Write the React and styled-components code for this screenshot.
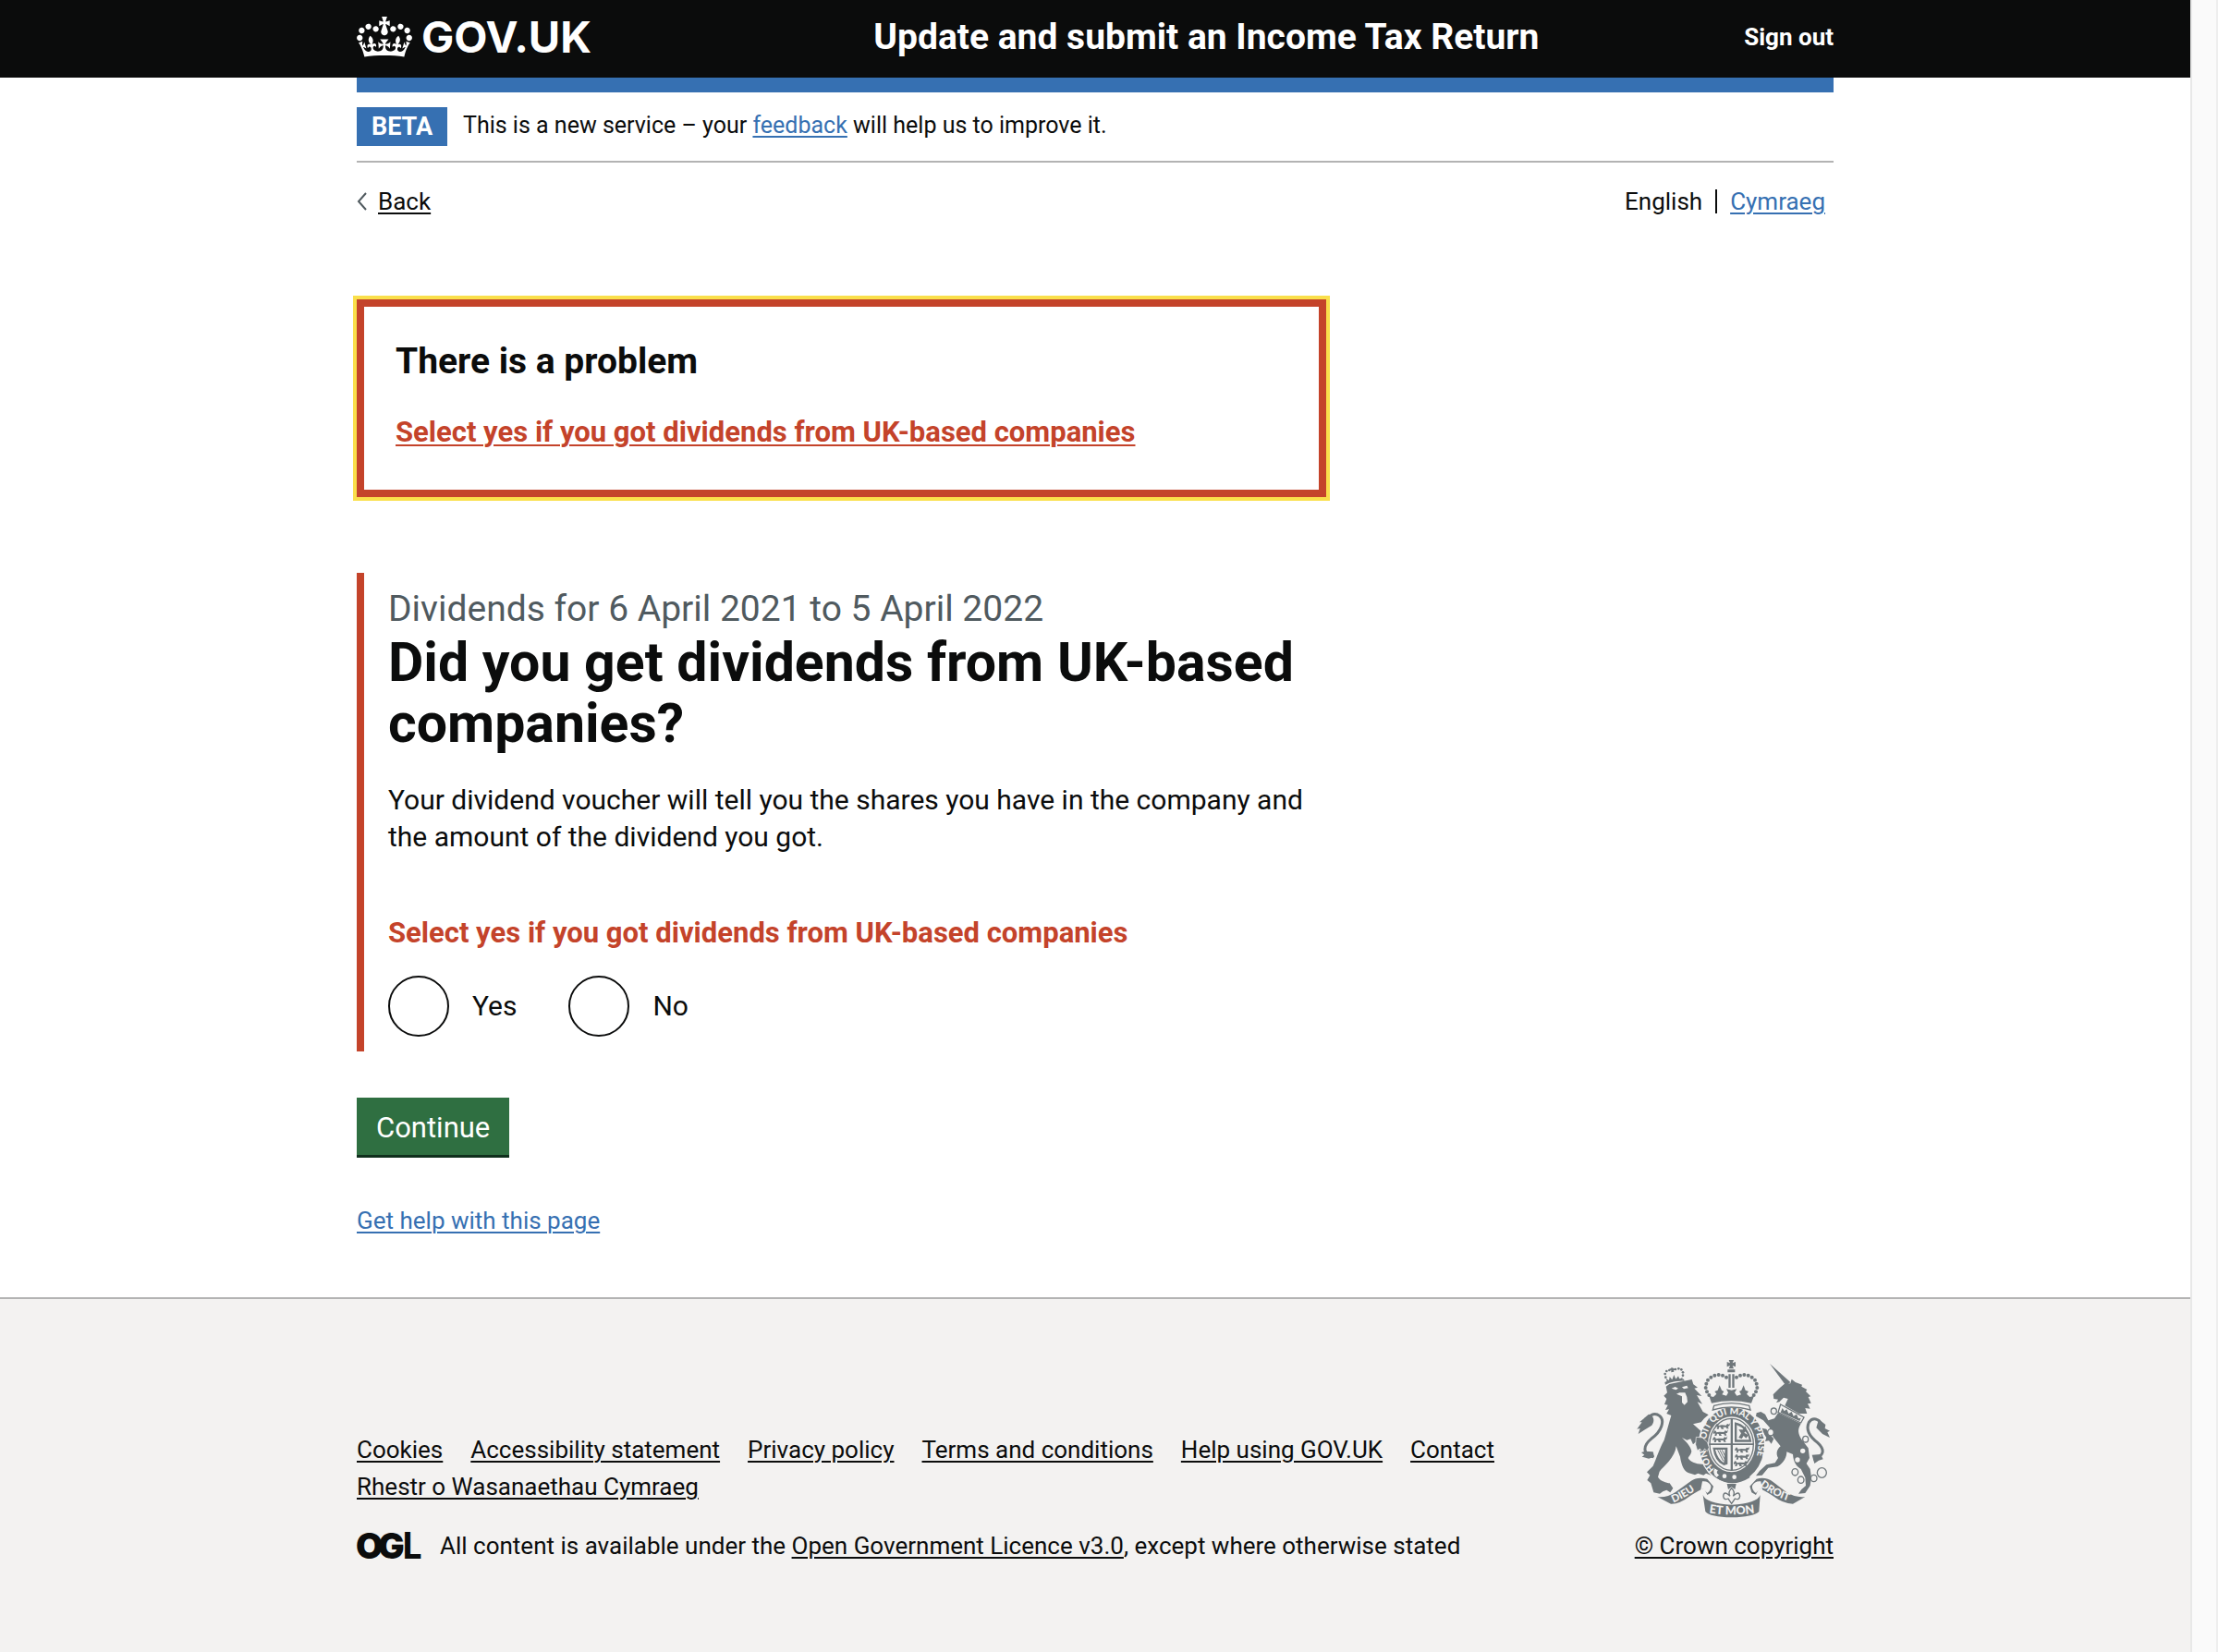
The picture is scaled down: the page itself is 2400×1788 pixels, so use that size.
import React from 'react';
import styled, { createGlobalStyle, css } from 'styled-components';

const color = {
  ink: '#0b0c0c',
  blue: '#3670b2',
  red: '#c4432a',
  yellow: '#fadf4b',
  green: '#2f6f41',
  greenShadow: '#0f2f1c',
  grey: '#505a5f',
  line: '#b3b3b3',
  panel: '#f3f2f1',
  crest: '#6f777b',
};

const GlobalStyle = createGlobalStyle`
  *, *::before, *::after { box-sizing: border-box; }
  body {
    margin: 0;
    background: #fff;
    color: ${color.ink};
    font-family: Roboto, "Liberation Sans", Arial, sans-serif;
    font-size: 26px;
    line-height: 40px;
  }
`;

const Frame = styled.div`
  display: flex;
  min-height: 100vh;
`;

const Page = styled.div`
  flex: 1;
  min-width: 0;
  display: flex;
  flex-direction: column;
`;

const ScrollTrack = styled.div`
  flex: 0 0 30px;
  background: #fafafa;
  border-left: 2px solid #e8e8e8;
  border-right: 2px solid #eeeeee;
`;

const Container = styled.div`
  width: 100%;
  max-width: 1598px;
  margin: 0 auto;
`;

const Link = styled.a`
  color: ${(p) => (p.$tone ? color[p.$tone] : color.ink)};
  text-decoration: underline;
  text-decoration-thickness: 2px;
  text-underline-offset: 3px;
  ${(p) => p.$bold && css`font-weight: 700;`}
`;

const Header = styled.header`
  background: ${color.ink};
  color: #fff;
`;

const HeaderRow = styled(Container)`
  display: flex;
  align-items: center;
  height: 84px;
  padding-bottom: 4px;
`;

const LogoCell = styled.div`
  flex: 0 0 35%;
`;

const LogoLink = styled.a`
  display: flex;
  align-items: center;
  gap: 10px;
  color: #fff;
  text-decoration: none;
  font: 700 47px/56px Inter, "Liberation Sans", sans-serif;
`;

const ServiceName = styled.a`
  flex: 1;
  color: #fff;
  text-decoration: none;
  font-size: 39px;
  font-weight: 700;
  line-height: 50px;
`;

const SignOut = styled.a`
  color: #fff;
  text-decoration: none;
  font-weight: 700;
`;

const BlueBar = styled(Container)`
  height: 16px;
  background: ${color.blue};
`;

const PhaseBanner = styled(Container)`
  display: flex;
  align-items: flex-start;
  gap: 17px;
  padding: 16px 0;
  border-bottom: 2px solid ${color.line};
`;

const PhaseTag = styled.strong`
  min-width: 98px;
  background: ${color.blue};
  color: #fff;
  font-size: 27px;
  font-weight: 700;
  line-height: 42px;
  text-align: center;
`;

const PhaseText = styled.span`
  font-size: 25px;
`;

const TopRow = styled(Container)`
  display: flex;
  justify-content: space-between;
  align-items: center;
  margin-top: 25px;
  line-height: 34px;
`;

const BackLink = styled.a`
  display: flex;
  align-items: center;
  gap: 12px;
  color: ${color.ink};
  text-decoration: underline;
  text-decoration-thickness: 2px;
  text-underline-offset: 3px;
`;

const LanguageList = styled.ul`
  display: flex;
  margin: 0;
  padding: 0 9px 0 0;
  list-style: none;
  line-height: 26px;
`;

const Language = styled.li`
  & + & {
    margin-left: 14px;
    padding-left: 14px;
    border-left: 2px solid ${color.ink};
  }
`;

const Main = styled(Container).attrs({ as: 'main' })`
  padding: 89px 0 66px;
`;

const Column = styled.div`
  width: calc((100% + 50px) * 2 / 3 - 50px);
`;

const ErrorSummary = styled.section`
  padding: 34px 34px 42px;
  border: 8px solid ${color.red};
  outline: 4px solid ${color.yellow};
`;

const ErrorTitle = styled.h2`
  margin: 0 0 32px;
  font-size: 39px;
  font-weight: 700;
  line-height: 50px;
`;

const ErrorList = styled.ul`
  margin: 0;
  padding: 0;
  list-style: none;
  font-size: 31px;
`;

const FormGroup = styled.div`
  margin-top: 82px;
  padding: 14px 0 16px 26px;
  border-left: 8px solid ${color.red};
`;

const Caption = styled.span`
  display: block;
  color: ${color.grey};
  font-size: 39px;
  line-height: 50px;
`;

const Heading = styled.h1`
  margin: 0 0 30px;
  font-size: 59px;
  font-weight: 700;
  line-height: 66px;
`;

const Paragraph = styled.p`
  margin: 0;
  font-size: 30px;
`;

const Fieldset = styled.fieldset`
  min-width: 0;
  margin: 0;
  padding: 0;
  border: 0;
`;

const ErrorMessage = styled.p`
  margin: 64px 0 26px;
  color: ${color.red};
  font-size: 31px;
  font-weight: 700;
`;

const Radios = styled.div`
  display: flex;
  gap: 56px;
`;

const RadioItem = styled.label`
  display: flex;
  align-items: center;
  gap: 25px;
  font-size: 30px;
`;

const RadioInput = styled.input`
  appearance: none;
  width: 66px;
  height: 66px;
  margin: 0;
  border: 2px solid ${color.ink};
  border-radius: 50%;
  background: #fff;

  &:checked {
    background: radial-gradient(${color.ink} 16px, #fff 17px);
  }
`;

const Button = styled.button`
  display: block;
  margin: 50px 0 54px;
  padding: 13px 21px 9px;
  border: 0;
  background: ${color.green};
  box-shadow: 0 3px 0 ${color.greenShadow};
  color: #fff;
  font: inherit;
  font-size: 31px;
  line-height: 40px;
`;

const HelpLine = styled.p`
  margin: 0;
  line-height: 34px;
`;

const Footer = styled.footer`
  flex: 1;
  background: ${color.panel};
  border-top: 2px solid ${color.line};
`;

const FooterRow = styled(Container)`
  display: flex;
  align-items: flex-end;
  gap: 50px;
  padding: 66px 0 95px;
`;

const FooterMeta = styled.div`
  flex: 1;
`;

const FooterLinks = styled.ul`
  display: flex;
  flex-wrap: wrap;
  column-gap: 30px;
  margin: 0 0 24px;
  padding: 0;
  list-style: none;
`;

const Licence = styled.div`
  display: flex;
  align-items: center;
  gap: 22px;
`;

const Copyright = styled.div`
  display: flex;
  flex-direction: column;
  align-items: center;
  gap: 11px;
`;

const Drawing = styled.svg`
  display: block;
  flex: none;
  overflow: visible;
`;

function CrownIcon() {
  return (
    <Drawing width="60" height="44" viewBox="0 0 132 97" fill="currentColor" aria-hidden="true">
      <path d="M25 30.2c3.5 1.5 7.7-.2 9.1-3.7 1.5-3.6-.2-7.8-3.9-9.2-3.6-1.4-7.6.3-9.1 3.9-1.4 3.5.3 7.5 3.9 9zM9 39.5c3.6 1.5 7.8-.2 9.2-3.7 1.5-3.6-.2-7.8-3.9-9.1-3.6-1.5-7.6.2-9.1 3.8-1.4 3.5.3 7.5 3.8 9zM4.4 57.2c3.5 1.5 7.7-.2 9.1-3.8 1.5-3.6-.2-7.7-3.9-9.1-3.5-1.5-7.6.3-9.1 3.8-1.4 3.5.3 7.6 3.9 9.1zm38.3-21.4c3.5 1.5 7.7-.2 9.1-3.8 1.5-3.6-.2-7.7-3.9-9.1-3.6-1.5-7.6.3-9.1 3.8-1.3 3.6.4 7.7 3.9 9.1zm64.4-5.6c-3.6 1.5-7.8-.2-9.1-3.7-1.5-3.6.2-7.8 3.8-9.2 3.6-1.4 7.7.3 9.2 3.9 1.3 3.5-.4 7.5-3.9 9zm15.9 9.3c-3.6 1.5-7.7-.2-9.1-3.7-1.5-3.6.2-7.8 3.7-9.1 3.6-1.5 7.7.2 9.2 3.8 1.5 3.5-.3 7.5-3.8 9zm4.7 17.7c-3.6 1.5-7.8-.2-9.2-3.8-1.5-3.6.2-7.7 3.9-9.1 3.6-1.5 7.7.3 9.2 3.8 1.3 3.5-.4 7.6-3.9 9.1zM89.3 35.8c-3.6 1.5-7.8-.2-9.2-3.8-1.4-3.6.2-7.7 3.9-9.1 3.6-1.5 7.7.3 9.2 3.8 1.4 3.6-.3 7.7-3.9 9.1zM69.7 17.7l8.9 4.7V9.3l-8.9 2.8c-.2-.3-.5-.6-.9-.9L72.4 0H59.6l3.5 11.2c-.3.3-.6.5-.9.9l-8.8-2.8v13.1l8.8-4.7c.3.3.6.7.9.9l-5 15.4v.1c-.2.8-.4 1.6-.4 2.4 0 4.1 3.1 7.5 7 8.1h.2c.3 0 .7.1 1 .1.4 0 .7 0 1-.1h.2c4-.6 7.1-4.1 7.1-8.1 0-.8-.1-1.7-.4-2.4V34l-5.1-15.4c.4-.2.7-.6 1-.9zM66 92.8c16.9 0 32.8 1.1 47.1 3.2 4-16.9 8.9-26.7 14-33.5l-9.6-3.4c1 4.9 1.1 7.2 0 10.2-1.5-1.4-3-4.3-4.2-8.7L108.6 76c2.8-2 5-3.2 7.5-3.3-4.4 9.4-10 11.9-13.6 11.2-4.3-.8-6.3-4.6-5.6-7.9 1-4.7 5.7-5.9 8-.5 4.3-8.7-3-11.4-7.6-8.8 7.1-7.2 7.9-13.5 2.1-21.1-8 6.1-8.1 12.3-4.5 20.8-4.7-5.4-12.1-2.5-9.5 6.2 3.4-5.2 7.9-2 7.2 3.1-.6 4.3-6.4 7.8-13.5 7.2-10.3-.9-10.9-8-11.2-13.8 2.5-.5 7.1 1.8 11 7.3L80.2 60c-4.1 4.4-8 5.3-12.3 5.4 1.4-4.4 8-11.6 8-11.6H55.5s6.4 7.2 7.9 11.6c-4.2-.1-8-1-12.3-5.4l1.4 16.4c3.9-5.5 8.5-7.7 10.9-7.3-.3 5.8-.9 12.8-11.1 13.8-7.2.6-12.9-2.9-13.5-7.2-.7-5 3.8-8.3 7.1-3.1 2.7-8.7-4.6-11.6-9.4-6.2 3.7-8.5 3.6-14.7-4.6-20.8-5.8 7.6-5 13.9 2.2 21.1-4.7-2.6-11.9.1-7.7 8.8 2.3-5.5 7.1-4.2 8.1.5.7 3.3-1.3 7.1-5.7 7.9-3.5.7-9-1.8-13.5-11.2 2.5.1 4.7 1.3 7.5 3.3l-4.7-15.4c-1.2 4.4-2.7 7.2-4.3 8.7-1.1-3-.9-5.3 0-10.2l-9.5 3.4c5 6.9 9.9 16.7 14 33.5 14.8-2.1 30.8-3.2 47.7-3.2z" />
    </Drawing>
  );
}

function BackChevron() {
  return (
    <Drawing width="11" height="20" viewBox="0 0 11 20" fill="none" stroke={color.grey} strokeWidth="2" aria-hidden="true">
      <path d="M10 1 2 10l8 9" />
    </Drawing>
  );
}

function OglLogo() {
  return (
    <Drawing width="68" height="30" viewBox="0 0 68 30" fill={color.ink} role="img" aria-label="Open Government Licence">
      <text y="29" fontFamily="Inter, sans-serif" fontWeight="900" fontSize="38">
        <tspan x="-1">O</tspan>
        <tspan x="23">G</tspan>
        <tspan x="49" fontFamily="Lato, sans-serif" fontSize="40">L</tspan>
      </text>
    </Drawing>
  );
}

// Beads along the two arches of the large crown, listed for the left arch only.
const archBeads = [
  [384, 122], [372, 116], [359, 114], [346, 116], [334, 122], [324, 131], [319, 143], [317, 156], [321, 169], [328, 180],
];
const lionCrownBeads = [
  [187, 122], [185, 111], [190, 102], [199, 99], [219, 96], [229, 94], [238, 97], [243, 106], [243, 116],
];
const chainLinks = [
  [538, 232, 9], [528, 301, 10], [641, 323, 9], [607, 430, 10], [626, 455, 10], [668, 450, 10], [694, 432, 15],
];

function Passant({ x, y }) {
  return (
    <path
      transform={`translate(${x} ${y})`}
      d="M0 6 5 0 9 4 10 7 20 5 34 6 38 1 44 3 48-3 45 8 40 10 43 17 36 17 34 12 24 12 27 18 19 18 17 12 12 11 10 18 4 18 6 10 0 12Z"
    />
  );
}

function RoyalArms() {
  return (
    <Drawing width="208" height="170" viewBox="96 66 624 510" fill={color.crest} role="img" aria-label="Royal coat of arms">
      <defs>
        <path id="garter" d="M348 420A84 100 0 0 1 402 242A84 100 0 0 1 456 420" />
        <path id="scrollLeft" d="M212 529Q262 508 302 474" />
        <path id="scrollMid" d="M328 562Q400 574 478 562" />
        <path id="scrollRight" d="M492 474Q540 512 602 528" />
      </defs>

      {/* lion */}
      <g>
        <path d="M188 152 199 144 272 129 277 145 291 155 280 158 304 183 288 180 306 209 290 202 308 234 326 244 312 256 302 268 276 274 296 292 322 316 324 350 325 380 312 364 304 366 292 356 294 348 284 332 276 340 268 322 256 326 240 318C254 332 268 346 271 362 270 372 262 378 260 384 264 396 290 406 310 404L326 414 341 431 334 440 318 434 310 440 292 434 282 439 260 432C242 424 236 394 234 380L221 346C218 382 180 412 167 428L162 446C170 460 190 464 200 466L211 482 202 496 190 488 178 493 168 500 148 496 139 466 127 456 136 440 126 430 146 410C156 388 168 350 182 326 190 300 198 270 205 246L190 240 198 226 186 228 194 212 183 210 190 192 181 182 192 172Z" />
        <path d="M148 380C112 376 112 344 140 322C176 296 184 262 168 248C150 234 130 246 126 266" fill="none" stroke={color.crest} strokeWidth="9" />
        <path d="M132 242C150 246 152 264 142 278L120 292 98 306 104 288 94 290 110 268 102 268Z" />
        <path d="M120 362 108 366 118 374 110 380 132 386 150 380 146 364Z" />
        <path d="M184 138Q214 124 246 128L248 134Q216 132 186 146Z" />
        {lionCrownBeads.map(([x, y]) => <circle key={`${x}-${y}`} cx={x} cy={y} r="4" />)}
        <path d="M205 90 212 92 214 104 205 106ZM200 94H216V99H200ZM192 138 188 126 198 132 200 120 208 130 214 114 220 128 228 118 232 128 242 122 240 132Z" />
        <g fill={color.panel}>
          <path d="M206 158 218 153 228 158 220 163ZM240 154 256 149 260 157 246 160ZM222 176 232 172 250 172 256 186 258 202 248 212 240 204 240 184Z" />
        </g>
      </g>

      {/* unicorn */}
      <g>
        <path d="M525 78 592 138 578 150Z" />
        <path d="M536 178 558 156 572 144 592 142 596 128 608 138 630 146 628 152 646 162 642 168 658 184 650 186 659 206 648 208 656 224 640 222 646 240 620 240 574 214 584 192 570 188 556 202 546 204 552 194 538 192Z" />
        <path d="M552 238 626 272C616 290 614 302 630 326L650 352 654 384 644 402 656 420 660 448 656 474 640 498 618 500 628 486 642 474 640 448 626 420C612 410 602 400 600 372L580 364C580 380 572 400 550 412L520 416 500 440 480 442 492 426 514 406 542 400 552 384C544 370 548 356 560 346L536 316 524 284 504 262 480 248 482 238 496 234 510 242 520 262 540 256Z" />
        <path d="M484 284 514 290 524 306 538 322 530 338 522 328 510 330 514 318 504 302 482 294Z" />
        <path d="M560 210 636 252 626 270 552 236Z" fill={color.panel} stroke={color.crest} strokeWidth="4" />
        <path d="M566 222 572 232 580 226 586 240 596 234 602 248 612 242 618 256 626 254 622 264 560 236Z" />
        <path d="M668 392C704 374 704 356 680 334C654 314 642 290 652 268C664 250 686 256 692 276" fill="none" stroke={color.crest} strokeWidth="9" />
        <path d="M684 258 706 276 704 288 720 296 712 300 720 318 696 306 676 286ZM662 374 690 372 698 388 684 392 670 402Z" />
        <circle cx="632" cy="361" r="8" fill={color.panel} />
        <circle cx="615" cy="390" r="8" fill={color.panel} />
        {chainLinks.map(([x, y, r]) => (
          <ellipse key={`${x}-${y}`} cx={x} cy={y} rx={r} ry={r + 1} fill={color.panel} stroke={color.crest} strokeWidth="4" />
        ))}
      </g>

      {/* garter and quartered shield */}
      <ellipse cx="402" cy="342" rx="109" ry="126" fill={color.panel} />
      <ellipse cx="402" cy="342" rx="105" ry="122" />
      <ellipse cx="401" cy="340" rx="77" ry="90" fill={color.panel} />
      <ellipse cx="401" cy="340" rx="71" ry="84" fill="none" stroke={color.crest} strokeWidth="4" />
      <path d="M398 256H405V424H398ZM328 337H474V342H328Z" />
      <text fill={color.panel} fontFamily="Lato, sans-serif" fontWeight="900" fontSize="30">
        <textPath href="#garter">HONI SOIT QUI MAL Y PENSE</textPath>
      </text>
      <Passant x={349} y={272} />
      <Passant x={342} y={294} />
      <Passant x={340} y={315} />
      <Passant x={412} y={349} />
      <Passant x={412} y={371} />
      <Passant x={408} y={393} />
      <path d="M411 268Q456 276 466 332H411ZM418 277V325H458Q452 290 418 277Z" fillRule="evenodd" />
      <path d="M424 318 432 304 424 292 438 292 446 280 450 294 442 302 456 310 448 320 440 312 434 322Z" />
      <path d="M340 350H388L388 404 376 408Q346 396 340 350ZM348 357Q356 388 376 400L380 357Z" fillRule="evenodd" />
      <path d="M356 358 374 394M363 358 377 386M370 358 379 376" stroke={color.crest} strokeWidth="3" />
      <path d="M350 420Q402 450 456 420L460 448Q402 484 350 448Z" />
      <path d="M346 416Q334 432 352 448L362 440Q350 432 358 424Z" fill={color.panel} stroke={color.crest} strokeWidth="3" />
      <g fill={color.panel}>
        <circle cx="378" cy="443" r="7" />
        <circle cx="410" cy="446" r="7" />
      </g>

      {/* lion's paw across the garter */}
      <path d="M286 316 306 318 322 332 328 350 322 362 314 354 306 364 298 354 290 360 284 340Z" stroke={color.panel} strokeWidth="2" />

      {/* crown */}
      <g>
        <path d="M392 66H408L404 76 414 72V88L404 84 408 94H392L396 84 386 88V72L396 76ZM388 97H412V106H388ZM391 112H398V156H391ZM403 112H410V156H403Z" />
        {archBeads.map(([x, y]) => (
          <React.Fragment key={`${x}-${y}`}>
            <circle cx={x} cy={y} r="6" />
            <circle cx={801 - x} cy={y} r="6" />
          </React.Fragment>
        ))}
        <path d="M336 206 328 182 342 186 352 176 346 168 356 164 362 148 369 164 376 168 370 178 384 182 390 172 384 160 401 164 418 160 411 172 418 182 432 178 426 168 433 164 440 148 446 164 456 168 450 176 460 186 474 182 465 206Q400 192 336 206Z" />
        <path d="M344 214Q400 198 458 214L462 228Q400 210 340 228Z" fill={color.panel} stroke={color.crest} strokeWidth="4" />
      </g>

      {/* motto scroll */}
      <path d="M160 510Q190 514 220 494L270 458Q290 444 322 452L342 476 336 496 322 504 312 482Q296 488 268 506 232 534 204 533Z" />
      <path d="M640 510Q610 514 580 496L536 462Q512 444 482 452L460 476 466 496 480 504 490 482Q506 488 534 506 568 532 600 533Z" />
      <path d="M306 460Q326 458 334 474 336 488 322 498L308 484 300 492ZM496 460Q476 458 468 474 466 488 480 498L494 484 502 492Z" fill={color.panel} />
      <path d="M308 504Q318 532 401 536 484 532 494 504L490 558Q470 576 401 577 332 576 316 558Z" />
      <g fill={color.panel} fontFamily="Lato, sans-serif" fontWeight="900">
        <text fontSize="34"><textPath href="#scrollLeft">DIEU</textPath></text>
        <text fontSize="38"><textPath href="#scrollMid">ET MON</textPath></text>
        <text fontSize="34"><textPath href="#scrollRight">DROIT</textPath></text>
      </g>
      <path d="M386 468H416L412 486 401 478 390 486Z" />
      <path d="M401 482Q414 494 406 508 426 488 428 508 426 522 412 516L401 532 390 516Q376 522 374 508 376 488 396 508 388 494 401 482Z" fill={color.panel} stroke={color.crest} strokeWidth="4" />
    </Drawing>
  );
}

const footerLinks = [
  'Cookies',
  'Accessibility statement',
  'Privacy policy',
  'Terms and conditions',
  'Help using GOV.UK',
  'Contact',
  'Rhestr o Wasanaethau Cymraeg',
];

export default function App() {
  return (
    <Frame>
      <GlobalStyle />
      <Page>
        <Header>
          <HeaderRow>
            <LogoCell>
              <LogoLink href="#">
                <CrownIcon />
                GOV.UK
              </LogoLink>
            </LogoCell>
            <ServiceName href="#">Update and submit an Income Tax Return</ServiceName>
            <SignOut href="#">Sign out</SignOut>
          </HeaderRow>
        </Header>
        <BlueBar />
        <PhaseBanner>
          <PhaseTag>BETA</PhaseTag>
          <PhaseText>
            This is a new service – your <Link href="#" $tone="blue">feedback</Link> will help us to improve it.
          </PhaseText>
        </PhaseBanner>
        <TopRow>
          <BackLink href="#">
            <BackChevron />
            Back
          </BackLink>
          <nav aria-label="Language">
            <LanguageList>
              <Language>English</Language>
              <Language><Link href="#" $tone="blue" lang="cy">Cymraeg</Link></Language>
            </LanguageList>
          </nav>
        </TopRow>

        <Main>
          <Column>
            <ErrorSummary aria-labelledby="error-title">
              <ErrorTitle id="error-title">There is a problem</ErrorTitle>
              <ErrorList>
                <li>
                  <Link href="#value" $tone="red" $bold>Select yes if you got dividends from UK-based companies</Link>
                </li>
              </ErrorList>
            </ErrorSummary>

            <form onSubmit={(e) => e.preventDefault()}>
              <FormGroup>
                <Caption>Dividends for 6 April 2021 to 5 April 2022</Caption>
                <Heading id="question">Did you get dividends from UK-based companies?</Heading>
                <Paragraph>
                  Your dividend voucher will tell you the shares you have in the company and the amount of the dividend you got.
                </Paragraph>
                <Fieldset aria-labelledby="question" aria-describedby="value-error">
                  <ErrorMessage id="value-error">Select yes if you got dividends from UK-based companies</ErrorMessage>
                  <Radios>
                    <RadioItem htmlFor="value">
                      <RadioInput id="value" type="radio" name="value" value="true" />
                      Yes
                    </RadioItem>
                    <RadioItem htmlFor="value-no">
                      <RadioInput id="value-no" type="radio" name="value" value="false" />
                      No
                    </RadioItem>
                  </Radios>
                </Fieldset>
              </FormGroup>
              <Button type="submit">Continue</Button>
            </form>
            <HelpLine>
              <Link href="#" $tone="blue">Get help with this page</Link>
            </HelpLine>
          </Column>
        </Main>

        <Footer>
          <FooterRow>
            <FooterMeta>
              <FooterLinks>
                {footerLinks.map((label) => (
                  <li key={label}><Link href="#">{label}</Link></li>
                ))}
              </FooterLinks>
              <Licence>
                <OglLogo />
                <span>
                  All content is available under the <Link href="#">Open Government Licence v3.0</Link>, except where otherwise stated
                </span>
              </Licence>
            </FooterMeta>
            <Copyright>
              <RoyalArms />
              <Link href="#">© Crown copyright</Link>
            </Copyright>
          </FooterRow>
        </Footer>
      </Page>
      <ScrollTrack aria-hidden="true" />
    </Frame>
  );
}
